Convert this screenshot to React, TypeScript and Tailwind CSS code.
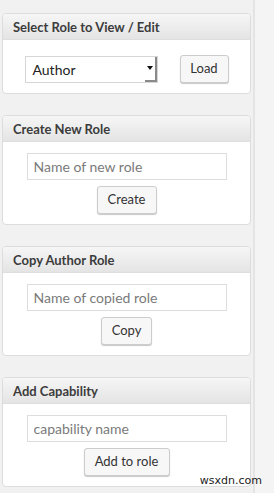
import React from "react";

const font = { fontFamily: "Lato, 'Open Sans', sans-serif" };

function Panel({ title, children }: { title: string; children: React.ReactNode }) {
  return (
    <section className="overflow-hidden rounded-[4px] border border-[#dcdcdc] bg-white">
      <h2 className="h-[26px] border-b border-[#dedede] bg-gradient-to-b from-[#f6f6f6] to-[#e4e4e4] pl-[10px] text-[13px] font-bold leading-[26px] text-[#3c3c3c]">
        {title}
      </h2>
      {children}
    </section>
  );
}

function Button({ label, width }: { label: string; width: string }) {
  return (
    <button
      className={`h-[28px] ${width} rounded-[3px] border border-[#cccccc] bg-[#f7f7f7] text-[13px] text-[#333] shadow-[0_1px_1px_#c8c8c8]`}
    >
      {label}
    </button>
  );
}

function TextPanel({ title, placeholder, button, width }: { title: string; placeholder: string; button: string; width: string }) {
  return (
    <Panel title={title}>
      <div className="flex flex-col items-center gap-[6px] pt-[11px] pb-[10px]">
        <input
          placeholder={placeholder}
          className="h-[27px] w-[200px] border border-[#dddddd] bg-white px-[6px] text-[14px] text-[#333] placeholder:text-[#7a7a7a] outline-none"
        />
        <Button label={button} width={width} />
      </div>
    </Panel>
  );
}

export default function App() {
  return (
    <div className="relative flex min-h-[493px] w-[274px] bg-[#f1f1f1]" style={font}>
      <div className="flex w-[251px] flex-col gap-[21px] pt-[13px] pl-[2px]">
        <Panel title="Select Role to View / Edit">
          <div className="flex items-center justify-center gap-[22px] pt-[15px] pb-[10px]">
            <div className="flex h-[27px] w-[133px] items-center border border-[#d6d6d6] bg-white">
              <span className="flex-1 pl-[7px] text-[14px] text-[#222]">Author</span>
              <span className="flex h-full w-[12px] items-center justify-center border-r-2 border-b-2 border-[#8a8a8a]">
                <svg width="6" height="4" viewBox="0 0 6 4">
                  <path d="M0 0h6L3 4z" fill="#111" />
                </svg>
              </span>
            </div>
            <Button label="Load" width="w-[49px]" />
          </div>
        </Panel>
        <TextPanel title="Create New Role" placeholder="Name of new role" button="Create" width="w-[60px]" />
        <TextPanel title="Copy Author Role" placeholder="Name of copied role" button="Copy" width="w-[51px]" />
        <TextPanel title="Add Capability" placeholder="capability name" button="Add to role" width="w-[86px]" />
      </div>
      <div className="ml-[2px] w-[2px] bg-[#e4e4e4]" />
      <div className="flex-1 bg-[#f4f4f4]" />
      <span className="absolute right-[12px] bottom-[4px] font-['DejaVu_Sans'] text-[11px] text-[#222]">wsxdn.com</span>
    </div>
  );
}
